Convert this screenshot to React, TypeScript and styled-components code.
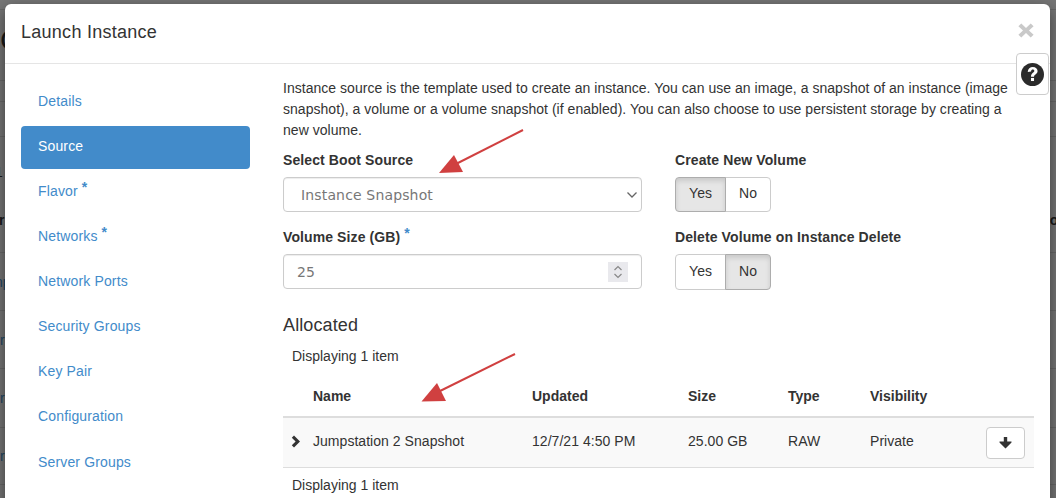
import React from "react";
import styled, { createGlobalStyle } from "styled-components";

const Global = createGlobalStyle`
  html, body { margin: 0; padding: 0; }
  body { width: 1056px; height: 498px; overflow: hidden; background: #767676; font-family: "Liberation Sans", Arial, sans-serif; font-size: 14px; color: #333; }
  * { box-sizing: border-box; }
`;

const Backdrop = styled.div`
  position: relative;
  width: 1056px;
  height: 498px;
  padding: 4px 6px 0 5px;
  overflow: hidden;
  background: #767676;
`;
const Behind = styled.div`
  position: absolute;
  inset: 0;
  display: flex;
  flex-direction: column;
`;
const BehindRow = styled.div<{ $h: number; $plain?: boolean }>`
  height: ${(p) => p.$h}px;
  flex: none;
  border-bottom: ${(p) => (p.$plain ? "none" : "1px solid #686868")};
  display: flex;
  align-items: center;
  justify-content: space-between;
  overflow: hidden;
`;
const BehindText = styled.span<{ $blue?: boolean; $bold?: boolean; $off?: number }>`
  color: ${(p) => (p.$blue ? "#214563" : "#1a1a1a")};
  font-size: 14px;
  font-weight: ${(p) => (p.$bold ? 700 : 400)};
  margin-left: ${(p) => p.$off ?? 0}px;
`;
const BehindEnd = styled.span`
  color: #1a1a1a;
  font-size: 14px;
  font-weight: 700;
  margin-right: -7px;
`;
const BehindHeading = styled.span`
  color: #1a1a1a;
  font-size: 30px;
  padding-bottom: 10px;
`;
const Modal = styled.div`
  position: relative;
  height: 600px;
  background: #fff;
  border-radius: 6px 6px 0 0;
  box-shadow: 0 5px 15px rgba(0, 0, 0, 0.5);
`;
const Header = styled.header`
  height: 60px;
  padding: 0 16px 2px;
  border-bottom: 1px solid #e5e5e5;
  display: flex;
  align-items: center;
`;
const Title = styled.h4`
  margin: 0;
  font-size: 18px;
  font-weight: 400;
  color: #333;
  letter-spacing: 0.27px;
`;
const Close = styled.svg`
  position: absolute;
  top: 19px;
  right: 16px;
  width: 16px;
  height: 15px;
  fill: #c9c9c9;
`;
const Help = styled.div`
  position: absolute;
  top: 49px;
  right: 1px;
  width: 33px;
  height: 42px;
  background: #fff;
  border: 1px solid #ccc;
  border-radius: 4px;
  display: flex;
  align-items: center;
  justify-content: center;
`;
const Body = styled.div`
  display: flex;
`;
const Nav = styled.nav`
  width: 229px;
  margin-left: 16px;
  padding-top: 17px;
  display: flex;
  flex-direction: column;
  gap: 2.07px;
  flex: none;
`;
const NavItem = styled.a<{ $active?: boolean }>`
  height: 43px;
  padding: 0 0 3px 17px;
  display: flex;
  align-items: center;
  border-radius: 4px;
  font-size: 14px;
  letter-spacing: 0.15px;
  color: ${(p) => (p.$active ? "#fff" : "#428bca")};
  background: ${(p) => (p.$active ? "#428bca" : "transparent")};
`;
const Star = styled.span`
  color: #428bca;
  font-size: 14px;
  font-weight: 700;
  margin-left: 4px;
  position: relative;
  top: -4px;
`;
const Content = styled.main`
  margin-left: 33px;
  width: 751px;
  padding-top: 14px;
`;
const Intro = styled.p`
  margin: 0 0 9px;
  max-width: 735px;
  font-size: 14px;
  line-height: 21px;
  letter-spacing: 0.03px;
  color: #333;
`;
const FormGrid = styled.div`
  display: grid;
  grid-template-columns: 359px 1fr;
  column-gap: 33px;
`;
const Field = styled.div`
  height: 77px;
`;
const Label = styled.label`
  display: block;
  font-weight: 700;
  font-size: 14px;
  line-height: 20px;
  letter-spacing: 0.1px;
  margin-bottom: 7px;
`;
const Control = styled.div`
  height: 35px;
  border: 1px solid #ccc;
  border-radius: 4px;
  display: flex;
  align-items: center;
  color: #777;
  font-family: "DejaVu Sans", sans-serif;
  font-size: 14px;
  box-shadow: inset 0 1px 1px rgba(0, 0, 0, 0.075);
`;
const SelectText = styled.span`
  padding-left: 17px;
  flex: 1;
  letter-spacing: 0.15px;
`;
const InputText = styled.span`
  padding-left: 13px;
  flex: 1;
`;
const Spin = styled.span`
  width: 20px;
  height: 20px;
  margin-right: 13px;
  background: #e9e9ed;
  display: flex;
  align-items: center;
  justify-content: center;
`;
const SelectChevron = styled.svg`
  width: 12px;
  height: 8px;
  margin-right: 3px;
`;
const Toggle = styled.div<{ $h: number }>`
  display: inline-flex;
  height: ${(p) => p.$h}px;
`;
const ToggleBtn = styled.div<{ $on?: boolean; $side: "l" | "r" }>`
  width: ${(p) => (p.$side === "l" ? 51 : 46)}px;
  border: 1px solid #ccc;
  ${(p) => (p.$side === "l" ? "border-radius: 4px 0 0 4px;" : "border-radius: 0 4px 4px 0; margin-left: -1px;")}
  background: ${(p) => (p.$on ? "#e6e6e6" : "#fff")};
  box-shadow: ${(p) => (p.$on ? "inset 0 3px 5px rgba(0,0,0,.125)" : "none")};
  border-color: ${(p) => (p.$on ? "#adadad" : "#ccc")};
  position: relative;
  z-index: ${(p) => (p.$on ? 1 : 0)};
  display: flex;
  align-items: center;
  justify-content: center;
  padding-bottom: 3px;
  font-size: 14px;
  color: #333;
`;
const Section = styled.h3`
  margin: 0;
  font-size: 18px;
  font-weight: 400;
  line-height: 20px;
  padding-top: 11px;
  letter-spacing: 0.12px;
`;
const Count = styled.div`
  padding-left: 9px;
  font-size: 14px;
  line-height: 20px;
  margin-top: 11px;
`;
const Table = styled.div`
  width: 751px;
`;
const HeadRow = styled.div`
  display: grid;
  grid-template-columns: 30px 219px 156px 100px 82px 1fr;
  height: 42px;
  align-items: center;
  font-weight: 700;
  border-bottom: 2px solid #ddd;
  margin-top: 10px;
`;
const DataRow = styled.div`
  display: grid;
  grid-template-columns: 30px 219px 156px 100px 82px 116px 39px;
  height: 50px;
  align-items: center;
  background: #f9f9f9;
  border-bottom: 1px solid #ddd;
`;
const Cell = styled.span`
  padding-bottom: 3px;
  letter-spacing: 0.04px;
`;
const Chevron = styled.svg`
  width: 10px;
  height: 13px;
  margin-left: 8px;
  margin-bottom: 2px;
`;
const ActionBtn = styled.div`
  width: 39px;
  height: 32px;
  border: 1px solid #ccc;
  border-radius: 4px;
  background: #fff;
  display: flex;
  align-items: center;
  justify-content: center;
`;
const Foot = styled(Count)`
  margin-top: 7px;
`;
const Arrow = styled.svg`
  position: absolute;
  left: 0;
  top: 0;
  width: 1056px;
  height: 498px;
  pointer-events: none;
`;

const Req = () => <Star>*</Star>;

export default function App() {
  return (
    <Backdrop>
      <Global />
      <Behind>
        <BehindRow $h={10} />
        <BehindRow $h={71}><BehindHeading>C</BehindHeading></BehindRow>
        <BehindRow $h={21} />
        <BehindRow $h={35} />
        <BehindRow $h={70} $plain><BehindText $off={-5}>1</BehindText></BehindRow>
        <BehindRow $h={26} $plain>
          <BehindText $bold $off={-1}>r</BehindText>
          <BehindEnd>ot</BehindEnd>
        </BehindRow>
        <BehindRow $h={20} />
        <BehindRow $h={58}><BehindText $blue $off={-5}>np</BehindText></BehindRow>
        <BehindRow $h={58}><BehindText $blue>r</BehindText></BehindRow>
        <BehindRow $h={59}><BehindText $blue>r</BehindText></BehindRow>
        <BehindRow $h={57}><BehindText $blue>r</BehindText></BehindRow>
      </Behind>
      <Modal>
        <Header>
          <Title>Launch Instance</Title>
        </Header>
        <Close viewBox="0 0 16 15">
          <path d="M3.300 0.500 L8 5 L12.700 0.500 L15.600 3.300 L11 7.500 L15.600 11.700 L12.700 14.500 L8 10 L3.300 14.500 L0.400 11.700 L5 7.500 L0.400 3.300 Z" />
        </Close>
        <Help>
          <svg width="23" height="23" viewBox="0 0 24 24">
            <circle cx="12" cy="12" r="12" fill="#2b2b2b" />
            <path d="M7 9.300C7.300 6 9.500 4.200 12.300 4.200c3 0 5 1.800 5 4.200 0 3.400-3.700 3.500-3.700 5.900h-3.200c0-4 3.500-4 3.500-5.900 0-.9-.7-1.500-1.600-1.500-1 0-1.700.7-1.800 2z" fill="#fff" />
            <rect x="10.400" y="15.600" width="3.200" height="3.200" fill="#fff" />
          </svg>
        </Help>
        <Body>
          <Nav>
            <NavItem>Details</NavItem>
            <NavItem $active>Source</NavItem>
            <NavItem>Flavor<Req /></NavItem>
            <NavItem>Networks<Req /></NavItem>
            <NavItem>Network Ports</NavItem>
            <NavItem>Security Groups</NavItem>
            <NavItem>Key Pair</NavItem>
            <NavItem>Configuration</NavItem>
            <NavItem>Server Groups</NavItem>
          </Nav>
          <Content>
            <Intro>
              Instance source is the template used to create an instance. You can use an image, a snapshot of an instance (image snapshot), a volume or a volume snapshot (if enabled). You can also choose to use persistent storage by creating a new volume.
            </Intro>
            <FormGrid>
              <Field>
                <Label>Select Boot Source</Label>
                <Control>
                  <SelectText>Instance Snapshot</SelectText>
                  <SelectChevron viewBox="0 0 12 8">
                    <path d="M1.500 1.500 L6 6 L10.500 1.500" stroke="#666" strokeWidth="1.300" fill="none" />
                  </SelectChevron>
                </Control>
              </Field>
              <Field>
                <Label>Create New Volume</Label>
                <Toggle $h={35}>
                  <ToggleBtn $side="l" $on>Yes</ToggleBtn>
                  <ToggleBtn $side="r">No</ToggleBtn>
                </Toggle>
              </Field>
              <Field>
                <Label>Volume Size (GB)<Req /></Label>
                <Control>
                  <InputText>25</InputText>
                  <Spin>
                    <svg width="10" height="16" viewBox="0 0 10 16">
                      <path d="M1.500 6 L5 2.500 L8.500 6 M1.500 10 L5 13.500 L8.500 10" stroke="#888" strokeWidth="1.200" fill="none" />
                    </svg>
                  </Spin>
                </Control>
              </Field>
              <Field>
                <Label>Delete Volume on Instance Delete</Label>
                <Toggle $h={36}>
                  <ToggleBtn $side="l">Yes</ToggleBtn>
                  <ToggleBtn $side="r" $on>No</ToggleBtn>
                </Toggle>
              </Field>
            </FormGrid>
            <Section>Allocated</Section>
            <Count>Displaying 1 item</Count>
            <Table>
              <HeadRow>
                <span />
                <span>Name</span>
                <span>Updated</span>
                <span>Size</span>
                <span>Type</span>
                <span>Visibility</span>
              </HeadRow>
              <DataRow>
                <Chevron viewBox="0 0 10 13">
                  <path d="M3 0.500 L9 6.500 L3 12.500 L0.800 10.300 L4.600 6.500 L0.800 2.700 Z" fill="#333" />
                </Chevron>
                <Cell>Jumpstation 2 Snapshot</Cell>
                <Cell>12/7/21 4:50 PM</Cell>
                <Cell>25.00 GB</Cell>
                <Cell>RAW</Cell>
                <Cell>Private</Cell>
                <ActionBtn>
                  <svg width="13" height="12" viewBox="0 0 13 12">
                    <path d="M4.800 0 H8.200 V4.500 H12.500 V5.500 L6.500 11.500 L0.500 5.500 V4.500 H4.800 Z" fill="#333" />
                  </svg>
                </ActionBtn>
              </DataRow>
              <Foot>Displaying 1 item</Foot>
            </Table>
          </Content>
        </Body>
      </Modal>
      <Arrow viewBox="0 0 1056 498">
        <path d="M523 130 L452 166" stroke="#d04040" strokeWidth="2" />
        <path d="M439 173 L454 155 L463 172 Z" fill="#d04040" />
        <path d="M515 354 L434 394" stroke="#d04040" strokeWidth="2" />
        <path d="M421.500 401.500 L437 383 L446 401 Z" fill="#d04040" />
      </Arrow>
    </Backdrop>
  );
}
